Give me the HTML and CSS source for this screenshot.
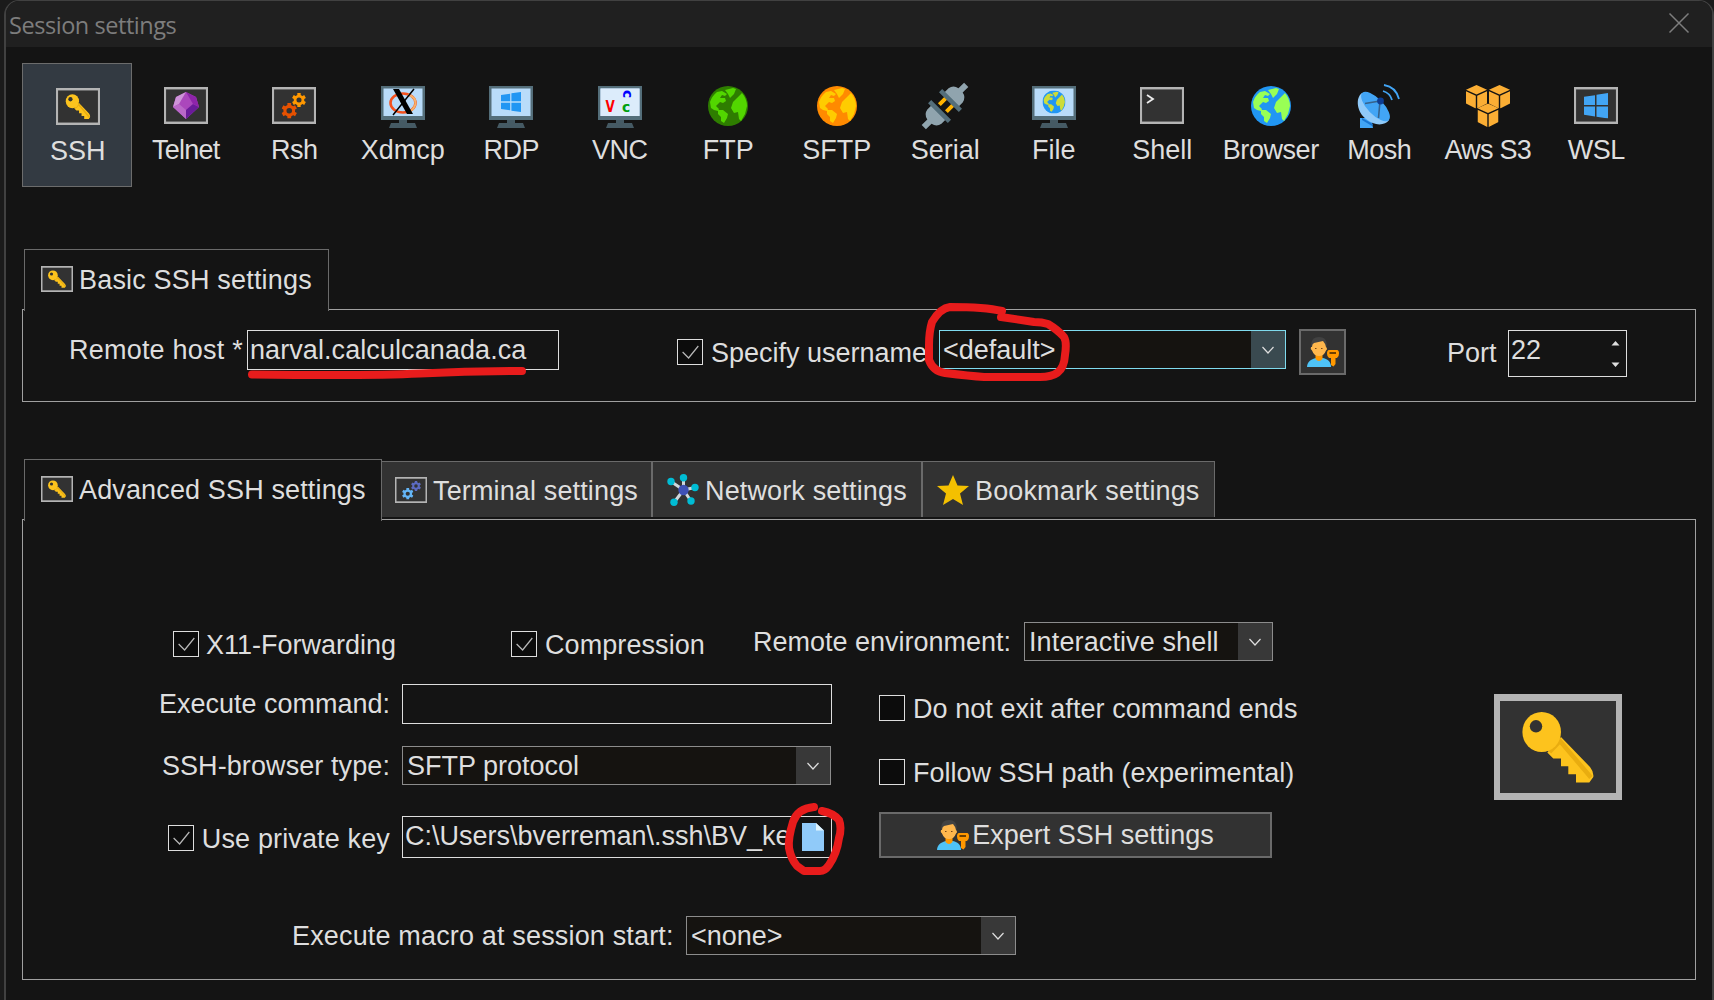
FILE: index.html
```html
<!DOCTYPE html>
<html lang="en">
<head>
<meta charset="utf-8">
<title>Session settings</title>
<link rel="stylesheet" href="styles.css">
</head>
<body>
<svg class="defs" aria-hidden="true">
  <symbol id="frame" viewBox="0 0 128 106" preserveAspectRatio="none">
    <rect width="128" height="106" fill="#b4b4b4"/><rect x="6" y="7" width="116" height="92" fill="#323232"/>
  </symbol>
  <symbol id="key" viewBox="0 0 128 106" preserveAspectRatio="none">
    <rect width="128" height="106" fill="#b4b4b4"/><rect x="6" y="7" width="116" height="92" fill="#323232"/>
    <path fill="#fdc31d" d="M67 43 96 73Q100 78 99.3 83L95.3 88.6H82V80.3H74.3V72.3H67V64.6H59.3L53.3 58.6Z"/>
    <path fill="none" stroke="#e9ad10" stroke-width="4.5" d="M55.5 58 66 47 97 83.5"/>
    <ellipse cx="47.7" cy="38" rx="19.3" ry="20" fill="#fdc31d"/><circle cx="42" cy="32.3" r="6.2" fill="#323232"/>
  </symbol>
  <symbol id="gear" viewBox="-10 -10 20 20">
    <g fill="currentColor"><rect x="-2.4" y="-10" width="4.8" height="20"/><rect x="-2.4" y="-10" width="4.8" height="20" transform="rotate(60)"/><rect x="-2.4" y="-10" width="4.8" height="20" transform="rotate(120)"/></g>
    <circle r="5.6" fill="none" stroke="currentColor" stroke-width="4"/><circle r="3.6" fill="#323232"/>
  </symbol>
  <symbol id="monitor" viewBox="0 0 44 44">
    <path fill="#546e7a" d="M0 2h44v34H0z"/><path fill="#455a64" d="M18 36h8v3h-8zM10 39h24l2 5H8z"/><path fill="#b9dcfa" d="M2.500 4.500h39V32h-39z"/>
  </symbol>
  <symbol id="globe" viewBox="0 0 40 40">
    <circle cx="20" cy="20" r="20" fill="var(--sea)"/>
    <g fill="var(--land)"><path d="M3 22 2 16Q4 10 9 6L14 5 19 8 17 10 14 9 12 12 17 12 18 15 15 17 12 16 8 20 11 23 10 25 6 24Z"/><path d="M17 4 25 2 28 3 26 8 22 12 20 8Z"/><path d="M10 24 15 24 20 28 19 32 16 37 13 35 13 31 10 28Z"/><path d="M34 7Q39 13 39 20L37 28 33 35 31 33 30 26 26 27 23 22 25 16 29 12Z"/></g>
  </symbol>
  <symbol id="windows" viewBox="0 0 24 30" preserveAspectRatio="none">
    <path fill="currentColor" d="M0 4.500 11 2.500V14H0zM12.500 2 24 0V14H12.500zM0 16H11V27.500L0 25.500zM12.500 16H24V30L12.500 28z"/>
  </symbol>
  <symbol id="user" viewBox="0 0 32 30">
    <path fill="#4fc3f7" d="M0 30C0 25 4 22 9 21H16C21 22 24 25 24 30Z"/><path fill="#ff9800" d="M8.500 17H15.500V22Q12 26 8.500 22Z"/>
    <path fill="#424242" d="M4.500 11Q3 0 12 0 21 0 19.500 11Z"/>
    <path fill="#ffb74d" d="M4 10H5Q5 7 7 6L16 4Q18 6 19 10 21 12 19 13.500 17 19 12 19 7 19 5 13.500 3 12 4 10Z"/>
    <path d="M8 11.500H9.500M14 11.500H15.500" stroke="#784719" stroke-width="1.200"/>
    <path fill="#ff9800" d="M22 13H30Q32 13 32 16.500T30 21H28.500V27L26.500 29.500 24 28V21H22Q20 20 20 16.500T22 13Z"/><path d="M22.500 16H29" stroke="#5c3500" stroke-width="1.800"/>
  </symbol>
  <symbol id="cube" viewBox="0 0 21 23.500">
    <path fill="#fbae34" d="M0 4.800 10.500 0 21 4.800 10.500 9.500ZM0 6.300 9.800 10.800V23.500L0 18.500ZM21 6.300 11.200 10.800V23.500L21 18.500Z"/>
  </symbol>
</svg>

<main class="window">
  <header class="titlebar">
    <h1 class="title">Session settings</h1>
    <svg class="close" viewBox="0 0 20 20"><path d="M.5.5 19.500 19.500M19.500.5.5 19.500"/></svg>
  </header>

  <nav class="toolbar">
    <a class="tool selected"><svg viewBox="0 0 44 44"><use href="#key" y="3" width="44" height="37"/></svg><span>SSH</span></a>
    <a class="tool tighter"><svg viewBox="0 0 44 44"><use href="#frame" y="3" width="44" height="37"/><path fill="#ab47bc" d="M22 8 32 13 35 23 22 35 9 23 12 13Z"/><path fill="#ce93d8" d="M22 8 12 13 9 23 15 20Z"/><path fill="#ba68c8" d="M9 23 15 20 22 26V35Z"/><path fill="#6a1b9a" d="M22 26 29 20 35 23 22 35Z"/><path fill="#8e24aa" d="M22 8 32 13 35 23 29 20Z"/></svg><span>Telnet</span></a>
    <a class="tool tight"><svg viewBox="0 0 44 44"><use href="#frame" y="3" width="44" height="37"/><use class="orange" href="#gear" x="20" y="9" width="14" height="14"/><use class="rust" href="#gear" x="9.500" y="19" width="15.500" height="15.500"/></svg><span>Rsh</span></a>
    <a class="tool"><svg viewBox="0 0 44 44"><use href="#monitor" width="44" height="44"/><ellipse cx="22" cy="19" rx="12.500" ry="9.500" fill="none" stroke="#f4511e" stroke-width="2.600"/><path d="M27 10.500Q35 13 34.500 20 33 26 27 28" fill="none" stroke="#f7b26a" stroke-width="2"/><path d="M12 31 33 5" stroke="#000" stroke-width="1.500"/><path fill="#000" d="M12 5H18L32 30H26Z"/></svg><span>Xdmcp</span></a>
    <a class="tool tight"><svg viewBox="0 0 44 44"><use href="#monitor" width="44" height="44"/><use class="blue" href="#windows" x="12" y="8" width="20" height="20"/></svg><span>RDP</span></a>
    <a class="tool tight"><svg viewBox="0 0 44 44"><use href="#monitor" width="44" height="44"/><path fill="#dcecfb" d="M2.500 4.500h39V32h-39z"/><text class="vnc" transform="translate(7.500 28) scale(.75 1)" fill="#f00">V</text><text class="vnc small" x="24" y="28" fill="#00a010">c</text><text class="vnc small" transform="translate(25 6) rotate(90)" fill="#00f">c</text></svg><span>VNC</span></a>
    <a class="tool"><svg class="green" viewBox="0 0 44 44"><use href="#globe" x="2" y="2" width="40" height="40"/></svg><span>FTP</span></a>
    <a class="tool"><svg class="amber" viewBox="0 0 44 44"><use href="#globe" x="2" y="2" width="40" height="40"/></svg><span>SFTP</span></a>
    <a class="tool"><svg viewBox="0 0 44 44"><g transform="translate(22 22) rotate(45)"><path fill="#ffb300" d="M-7-8h4V3h-4zM3-8h4V3h-4z"/><path fill="#90a4ae" d="M-10-9V-15Q-9-21-3-22V-30H3V-22Q9-21 10-15V-9ZM-10 9V15Q-9 21-3 22V30H3V22Q9 21 10 15V9Z"/><path fill="#546e7a" d="M-14-10h28v4.500h-28zM-14 5.500h28V10h-28z"/></g></svg><span>Serial</span></a>
    <a class="tool"><svg class="lime" viewBox="0 0 44 44"><use href="#monitor" width="44" height="44"/><use href="#globe" x="10.500" y="6.500" width="23" height="23"/></svg><span>File</span></a>
    <a class="tool"><svg viewBox="0 0 44 44"><use href="#frame" y="3" width="44" height="37"/><path d="M7 11 13 15 7 19" fill="none" stroke="#eee" stroke-width="1.800"/></svg><span>Shell</span></a>
    <a class="tool tight"><svg class="earth" viewBox="0 0 44 44"><use href="#globe" x="2" y="2" width="40" height="40"/></svg><span>Browser</span></a>
    <a class="tool tight"><svg viewBox="0 0 44 44"><path fill="#42a5f5" d="M3 34H14L16 44H3Z"/><path fill="#1976d2" d="M5 34 16 40 15 42 5 36Z"/><path fill="#90caf9" d="M5 9C-2 14 0 28 9 35 17 42 28 42 32 36Z"/><ellipse cx="18.500" cy="22.500" rx="19" ry="8" transform="rotate(46 18.500 22.500)" fill="#42a5f5"/><path d="M8 19.500 23 17 21.500 34" fill="none" stroke="#37638c" stroke-width="1.600"/><circle cx="23.500" cy="17" r="3.400" fill="#0d3c91"/><path d="M26 7Q33 9 35 16M27 1Q39 3 42 15" fill="none" stroke="#42a5f5" stroke-width="1.800"/></svg><span>Mosh</span></a>
    <a class="tool tighter"><svg viewBox="0 0 44 44"><use href="#cube" y="1" width="21" height="23.500"/><use href="#cube" x="23" y="1" width="21" height="23.500"/><use href="#cube" x="11.500" y="19.500" width="21" height="23.500"/></svg><span>Aws S3</span></a>
    <a class="tool tight"><svg viewBox="0 0 44 44"><use href="#frame" y="3" width="44" height="37"/><use class="sky" href="#windows" x="10" y="9" width="24" height="25.500"/></svg><span>WSL</span></a>
  </nav>

  <section class="basic">
    <div class="tabs"><div class="tab active first"><svg class="tabicon"><use href="#key" width="32" height="26"/></svg><span>Basic SSH settings</span></div></div>
    <div class="panel basic-panel">
      <label class="host-label">Remote host *</label>
      <div class="field host">narval.calculcanada.ca</div>
      <label class="check specify"><svg class="box" viewBox="0 0 26 26"><path d="M5 13 11.500 19.500 22 6.500"/></svg>Specify username</label>
      <div class="combo focus user"><span>&lt;default&gt;</span><i class="drop"><svg viewBox="0 0 12 8"><path d="M.5 1 6 7 11.500 1"/></svg></i></div>
      <button class="button user-button"><svg class="usericon"><use href="#user" width="32" height="30"/></svg></button>
      <label class="port-label">Port</label>
      <div class="field port">22<svg class="spin" viewBox="0 0 8 26"><path d="M0 4.500 4 0 8 4.500ZM0 21.500 4 26 8 21.500Z"/></svg></div>
    </div>
  </section>

  <section class="advanced">
    <div class="tabs">
      <div class="tab active adv"><svg class="tabicon"><use href="#key" width="32" height="26"/></svg><span>Advanced SSH settings</span></div>
      <div class="tab terminal"><svg class="tabicon" viewBox="0 0 32 26"><use href="#frame" width="32" height="26"/><use class="sky2" href="#gear" x="7" y="11" width="11.500" height="11.500"/><use class="indigo" href="#gear" x="16" y="4" width="10" height="10"/></svg><span>Terminal settings</span></div>
      <div class="tab network"><svg class="tabicon tall" viewBox="0 0 32 32"><path d="M16.500 16V4M16.500 16 4 7.500M16.500 16 28 13.500M16.500 16 24 27M16.500 16 7 28.500" stroke="#cfd8dc" stroke-width="3"/><g fill="#00bcd4"><circle cx="16.500" cy="3.700" r="3.700"/><circle cx="4" cy="7.500" r="3.700"/><circle cx="28" cy="13.500" r="3.700"/><circle cx="24" cy="27" r="3.700"/><circle cx="7" cy="28.200" r="3.700"/></g><circle cx="16.500" cy="16" r="5.200" fill="#3f51b5"/></svg><span>Network settings</span></div>
      <div class="tab bookmark"><svg class="tabicon tall" viewBox="0 0 32 32"><path fill="#f4c000" d="M16 1 20.500 11.500 32 12 23 19.500 26 31 16 25 6 31 9 19.500 0 12 11.500 11.500Z"/></svg><span>Bookmark settings</span></div>
    </div>
    <div class="panel adv-panel">
      <div class="row options">
        <label class="check x11"><svg class="box" viewBox="0 0 26 26"><path d="M5 13 11.500 19.500 22 6.500"/></svg>X11-Forwarding</label>
        <label class="check compression"><svg class="box" viewBox="0 0 26 26"><path d="M5 13 11.500 19.500 22 6.500"/></svg>Compression</label>
        <label class="env-label">Remote environment:</label>
        <div class="combo env"><span>Interactive shell</span><i class="drop"><svg viewBox="0 0 12 8"><path d="M.5 1 6 7 11.500 1"/></svg></i></div>
      </div>
      <div class="columns">
        <div class="left">
          <div class="row command"><label>Execute command:</label><div class="field"></div></div>
          <div class="row browser"><label>SSH-browser type:</label><div class="combo"><span>SFTP protocol</span><i class="drop"><svg viewBox="0 0 12 8"><path d="M.5 1 6 7 11.500 1"/></svg></i></div></div>
          <div class="row private"><label class="check"><svg class="box" viewBox="0 0 26 26"><path d="M5 13 11.500 19.500 22 6.500"/></svg>Use private key</label><div class="field keyfile"><span class="path">C:\Users\bverreman\.ssh\BV_ke</span><svg class="file" viewBox="0 0 22 28"><path fill="#90caf9" d="M0 0H14L22 7.500V28H0Z"/><path fill="#e1f5fe" d="M14 0 22 7.500H14Z"/></svg></div></div>
        </div>
        <div class="middle">
          <label class="check"><svg class="box" viewBox="0 0 26 26"></svg>Do not exit after command ends</label>
          <label class="check follow"><svg class="box" viewBox="0 0 26 26"></svg>Follow SSH path (experimental)</label>
          <button class="button expert"><svg class="usericon"><use href="#user" width="32" height="30"/></svg><span>Expert SSH settings</span></button>
        </div>
        <svg class="bigkey"><use href="#key" width="128" height="106"/></svg>
      </div>
      <div class="row macro"><label>Execute macro at session start:</label><div class="combo"><span>&lt;none&gt;</span><i class="drop"><svg viewBox="0 0 12 8"><path d="M.5 1 6 7 11.500 1"/></svg></i></div></div>
    </div>
  </section>
</main>

<svg class="marks" viewBox="0 0 1714 1000">
  <path d="M252 374.500Q370 376 420 373.500T522 371"/>
  <path d="M1002 311Q985 307 950 307C941 308 935 317 932 322Q929 332 929 345V360C932 368 938 372 945 373Q970 376 984 377H1040C1054 377 1064 373 1065 355Q1067 342 1064 337 1058 330 1048 324 1042 322 1034 322L1001 317"/>
  <path d="M814 807C803 808 796 813 793 822Q788 838 789 848 791 859 797 866L804 871H820Q825 871 829 865C836 855 838 845 839 838Q842 828 839 820 833 813 822 811"/>
</svg>
</body>
</html>
```
FILE: styles.css
```css
* { box-sizing: border-box; }
body {
  margin: 0;
  width: 1714px;
  height: 1000px;
  overflow: hidden;
  position: relative;
  background: #1b1b1b;
  color: #dedede;
  font: 27px/30px "Liberation Sans", Arial, sans-serif;
  white-space: nowrap;
}
svg { display: block; flex: none; }
.defs { display: none; }
.window {
  margin-left: 4px;
  height: 1010px;
  border: 2px solid #414141;
  border-top-width: 1px;
  border-radius: 15px 15px 0 0;
  background: #141414;
  overflow: hidden;
}
.titlebar {
  height: 46px;
  padding: 0 23px 0 3px;
  background: #202020;
  display: flex;
  justify-content: space-between;
}
.title {
  margin: 9px 0 0;
  font: 400 23.500px/30px "Open Sans", sans-serif;
  letter-spacing: -0.450px;
  color: #7d7d7d;
}
.close { width: 20px; height: 20px; margin-top: 12px; overflow: visible; fill: none; stroke: #7d7d7d; stroke-width: 1.500; }

.toolbar { display: flex; height: 124px; margin: 16px 0 0 17px; }
.tool { width: 108.500px; flex: none; display: flex; flex-direction: column; align-items: center; padding-top: 21px; }
.tool svg { width: 44px; height: 44px; overflow: visible; }
.tool span { margin-top: 7px; }
.tool.selected { width: 109.500px; margin-left: -1px; background: #333a42; border: 1px solid #6c6c6c; padding-left: 2px; }
.tight span { letter-spacing: -0.450px; }
.tighter span { letter-spacing: -0.750px; }
.orange { color: #ff9800; }
.rust { color: #e65100; }
.blue { color: #2196f3; }
.sky { color: #42a5f5; }
.sky2 { color: #64b5f6; }
.indigo { color: #5c6bc0; }
.vnc { font: bold 16px "DejaVu Sans", sans-serif; }
.vnc.small { font-size: 14px; }
.green { --sea: #2e7d00; --land: #52d600; }
.amber { --sea: #ff8a00; --land: #ffcc00; }
.lime { --sea: #2196f3; --land: #cddc39; }
.earth { --sea: #2196f3; --land: #99ff55; }

.basic { margin: 62px 0 0 16px; }
.advanced { margin: 57px 0 0 16px; }
.tabs { display: flex; height: 60px; padding-left: 2px; align-items: flex-start; letter-spacing: 0.140px; }
.tab { display: flex; align-items: flex-start; background: #323232; border: 1px solid #6a6a6a; border-bottom: 0; height: 56px; margin-top: 2px; padding-left: 13px; padding-top: 14px; }
.tab.active { background: #141414; height: 62px; margin-top: 0; padding: 15px 0 0 16px; position: relative; }
.tabicon { width: 32px; height: 26px; }
.tab .tabicon { margin-top: 1px; margin-right: 6px; }
.tabicon.tall { height: 32px; }
.tab .tabicon.tall { margin-top: -2px; }
.first { width: 305px; letter-spacing: 0.180px; }
.adv { width: 358px; }
.terminal { width: 270px; border-left: 0; }
.network { width: 270px; padding-left: 14px; }
.bookmark { width: 293px; padding-left: 14px; }

.panel { width: 1674px; border: 1px solid #a0a0a0; }
.basic-panel { height: 93px; display: flex; align-items: flex-start; padding-top: 20px; }
.adv-panel { height: 461px; padding-top: 102px; }

.field { border: 1px solid #dedede; height: 40px; padding: 4px 2px; }
.combo { height: 39px; border: 1px solid #8c8c8c; background: #151310; display: flex; justify-content: space-between; }
.combo > span { padding: 4px 0 0 4px; }
.drop { width: 34px; background: #383838; display: flex; align-items: center; justify-content: center; }
.drop svg { width: 12px; height: 8px; fill: none; stroke: #dedede; stroke-width: 1.200; }
.focus { border-color: #7fdbee; }
.focus .drop { background: #3a4a50; }
.combo.focus > span { padding-left: 3px; }
.check { display: flex; align-items: flex-start; gap: 8px; }
.box { width: 26px; height: 26px; margin-top: 1px; border: 1px solid #dedede; background: #0c0c0c; fill: none; stroke: #b8b8b8; stroke-width: 1.300; }
.button { font: inherit; color: inherit; padding: 0; background: #323232; border: 2px solid #6a6a6a; display: flex; align-items: center; justify-content: center; }
.usericon { width: 32px; height: 30px; }

.host-label { width: 178px; margin: 5px 0 0 46px; flex: none; letter-spacing: 0.220px; }
.host { width: 312px; flex: none; letter-spacing: 0.080px; }
.specify { margin: 8px 0 0 118px; width: 262px; flex: none; }
.user { width: 347px; flex: none; }
.user-button { width: 47px; height: 46px; margin: -1px 0 0 13px; }
.port-label { width: 61px; margin: 8px 0 0 101px; }
.port { width: 119px; height: 47px; display: flex; justify-content: space-between; padding-right: 6px; }
.spin { width: 9px; height: 26px; margin-top: 6px; fill: #dedede; }

.row { display: flex; align-items: flex-start; }
.options { height: 62px; padding-left: 150px; }
.x11 { margin-top: 8px; width: 338px; gap: 7px; }
.compression { margin-top: 8px; width: 242px; letter-spacing: 0.080px; }
.env-label { margin-top: 5px; width: 271px; }
.env { width: 249px; letter-spacing: 0.120px; }
.columns { display: flex; height: 232px; }
.left { width: 809px; }
.left .row > label { width: 367px; margin-right: 12px; text-align: right; justify-content: flex-end; }
.left .field { width: 430px; }
.left .combo { width: 429px; }
.command { height: 62px; }
.command label { padding-top: 5px; }
.browser { height: 70px; }
.browser label { padding-top: 5px; letter-spacing: 0.090px; }
.private .check { padding-top: 8px; letter-spacing: 0.140px; }
.left .keyfile { height: 42px; display: flex; }
.path { width: 389px; }
.file { width: 22px; height: 28px; margin: 2px 0 0 8px; }
.middle { width: 640px; padding: 10px 0 0 47px; letter-spacing: 0.060px; }
.middle .follow { margin-top: 34px; letter-spacing: 0; }
.expert { width: 393px; height: 46px; margin-top: 24px; gap: 3px; }
.bigkey { width: 128px; height: 106px; margin: 10px 0 0 22px; }
.macro { padding-left: 269px; }
.macro label { width: 394px; padding-top: 5px; letter-spacing: 0.160px; }
.macro .combo { width: 330px; }

.marks { position: absolute; left: 0; top: 0; width: 1714px; height: 1000px; pointer-events: none; fill: none; stroke: #e81c1c; stroke-width: 8; stroke-linecap: round; stroke-linejoin: round; }
```
